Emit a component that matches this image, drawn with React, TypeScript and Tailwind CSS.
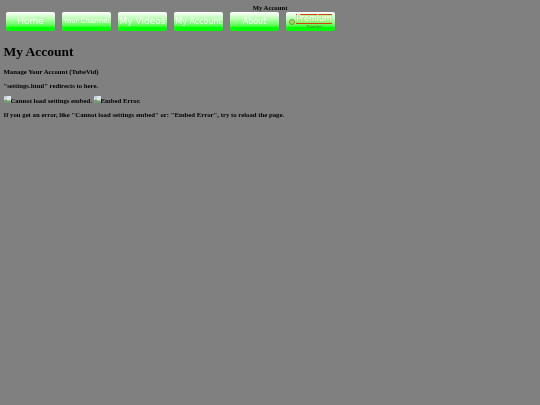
import React from 'react';

const navItems = [
  { label: 'Home', size: 'text-[9px]' },
  { label: 'Your Channel', size: 'text-[7px]' },
  { label: 'My Videos', size: 'text-[9px]' },
  { label: 'My Account', size: 'text-[8px]' },
  { label: 'About', size: 'text-[8px]' },
];

const sans = 'font-["DejaVu_Sans",sans-serif]';

// broken image placeholder, as the browser draws it
const BrokenImage = () => (
  <svg width="7" height="7" viewBox="0 0 7 7" className="inline-block align-baseline">
    <rect width="7" height="7" fill="#dfe6ea" />
    <path d="M0 7V4.5L2 3l2 2 1-1 2 1.5V7z" fill="#6f9f66" />
    <rect x="0" y="0" width="3" height="2" fill="#b9cde0" />
  </svg>
);

const NavButton = ({ children }: { children: React.ReactNode }) => (
  <div className="w-[49px] h-[19px] shrink-0 rounded-[2px] bg-gradient-to-b from-[#ffffff] to-[#00ff00] to-[80%] flex items-center justify-center overflow-hidden">
    {children}
  </div>
);

export default function App() {
  return (
    <div className="w-[540px] h-[405px] bg-[#808080] text-black font-['Liberation_Serif',serif] overflow-hidden pt-[4px] blur-[0.2px]">
      <p className="text-center text-[6.7px] leading-[7px] font-bold">My Account</p>

      <div className="flex gap-[7px] pl-[6px] mt-[1px]">
        {navItems.map((item) => (
          <NavButton key={item.label}>
            <span className={`${sans} ${item.size} text-white whitespace-nowrap leading-none`}>{item.label}</span>
          </NavButton>
        ))}
        <NavButton>
          <div className="flex items-center">
            <span className="w-[6px] h-[6px] rounded-full border border-[#7a9a30] bg-[#b0d070] mr-[1px] mt-[1px]" />
            <div className="flex flex-col items-center">
              <span className={`${sans} text-[8px] leading-[8px] text-white bg-[#a0e060]/50 border-t border-b border-t-[#d04010] border-b-[#d04010] whitespace-nowrap`}>
                Premium
              </span>
              <span className={`${sans} text-[4px] leading-[5px] text-[#4a8a20]`}>TubeVid</span>
            </div>
          </div>
        </NavButton>
      </div>

      <h1 className="text-[13.5px] leading-[17px] font-bold pl-[3.5px] mt-[11.5px]">My Account</h1>

      <div className="pl-[3.5px] text-[6.75px] leading-[8px] font-bold">
        <p className="mt-[8px]">Manage Your Account (TubeVid)</p>
        <p className="mt-[6.5px]">"settings.html" redirects to here.</p>
        <p className="mt-[6.2px]">
          <BrokenImage />Cannot load settings embed. <BrokenImage />Embed Error.
        </p>
        <p className="mt-[6.2px]">If you get an error, like "Cannot load settings embed" or: "Embed Error", try to reload the page.</p>
      </div>
    </div>
  );
}
